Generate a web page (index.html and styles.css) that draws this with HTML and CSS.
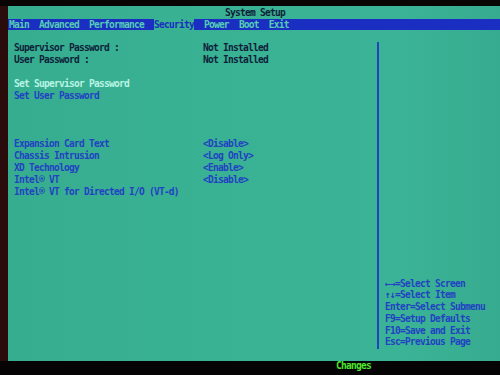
FILE: index.html
```html
<!DOCTYPE html>
<html lang="en">
<head>
  <meta charset="UTF-8" />
  <meta name="viewport" content="width=device-width, initial-scale=1.0"/>
  <title>System Setup</title>
  <link rel="stylesheet" href="styles.css">
</head>
<body>
  <div class="screen">
    <div class="monitor">
      <div class="bezel"></div>

      <div class="panel">
        <div class="title">System Setup</div>

        <!-- Menu bar -->
        <nav class="menubar">
          <span class="tab">Main</span>
          <span class="tab">Advanced</span>
          <span class="tab">Performance</span>
          <span class="tab active">Security</span>
          <span class="tab">Power</span>
          <span class="tab">Boot</span>
          <span class="tab">Exit</span>
        </nav>

        <div class="content">
          <section class="options">
            <div class="row info">
              <span class="label">Supervisor Password :</span>
              <span class="value">Not Installed</span>
            </div>
            <div class="row info">
              <span class="label">User Password :</span>
              <span class="value">Not Installed</span>
            </div>

            <div class="row item selected skip-1">
              <span class="label">Set Supervisor Password</span>
            </div>
            <div class="row item">
              <span class="label">Set User Password</span>
            </div>

            <div class="row item skip-3">
              <span class="label">Expansion Card Text</span>
              <span class="value">&lt;Disable&gt;</span>
            </div>
            <div class="row item">
              <span class="label">Chassis Intrusion</span>
              <span class="value">&lt;Log Only&gt;</span>
            </div>
            <div class="row item">
              <span class="label">XD Technology</span>
              <span class="value">&lt;Enable&gt;</span>
            </div>
            <div class="row item">
              <span class="label">Intel&reg; VT</span>
              <span class="value">&lt;Disable&gt;</span>
            </div>
            <div class="row item">
              <span class="label">Intel&reg; VT for Directed I/O (VT-d)</span>
            </div>
          </section>

          <!-- Help column -->
          <aside class="help">
            <div class="help-line">←→=Select Screen</div>
            <div class="help-line">↑↓=Select Item</div>
            <div class="help-line">Enter=Select Submenu</div>
            <div class="help-line">F9=Setup Defaults</div>
            <div class="help-line">F10=Save and Exit</div>
            <div class="help-line">Esc=Previous Page</div>
          </aside>
        </div>
      </div>
    </div>

    <div class="status">Changes</div>
  </div>
</body>
</html>
```

FILE: styles.css
```css
:root {
  --teal: #39b193;
  --blue: #1a2ec2;
  --ink: #0e1f3a;
  --item: #2242c2;
  --hilite: #b8f4e4;
  --tab-text: #55cdb3;
  --green: #4ee62c;
}
* { box-sizing: border-box; margin: 0; padding: 0; }
body {
  background: #080404;
  font-family: "DejaVu Sans Mono", "Liberation Mono", monospace;
  font-weight: bold;
  font-size: 9.6px;
  letter-spacing: -0.78px;
  white-space: nowrap;
}

.screen {
  width: 500px; height: 375px;
  display: flex; flex-direction: column;
  background: #0a0505;
  overflow: hidden;
}
.monitor {
  display: flex;
  height: 355px;
  margin-top: 6px;
}
.bezel { width: 8px; background: #2a0c0c; }

.panel {
  flex: 1;
  background: linear-gradient(90deg, #37ad90, var(--teal) 40%, #3bb396 80%, #37ab8f);
  display: flex; flex-direction: column;
}

.title {
  height: 13px;
  line-height: 13px;
  text-align: center;
  padding-left: 2px;
  color: var(--ink);
}

.menubar {
  height: 11px;
  line-height: 11px;
  background: var(--blue);
  display: flex;
  gap: 10px;
  padding-left: 1px;
}
.tab { color: var(--tab-text); }
.tab.active { background: var(--teal); color: var(--blue); }

.content {
  flex: 1;
  display: flex;
}

.options {
  width: 369px;
  padding: 12px 0 0 6px;
  line-height: 12px;
}
.row { display: flex; height: 12px; }
.row .label { width: 189px; }
.row.info { color: var(--ink); }
.row.item { color: var(--item); }
.row.selected { color: var(--hilite); }
.skip-1 { margin-top: 12px; }
.skip-3 { margin-top: 36px; }

.help {
  flex: 1;
  margin: 12px 0 12px 0;
  border-left: 2px solid var(--item);
  padding: 0 0 1px 6px;
  display: flex; flex-direction: column; justify-content: flex-end;
  color: var(--item);
  line-height: 11.7px;
}

.status {
  height: 14px;
  line-height: 10px;
  padding-left: 336px;
  color: var(--green);
  background: #050303;
}
```
